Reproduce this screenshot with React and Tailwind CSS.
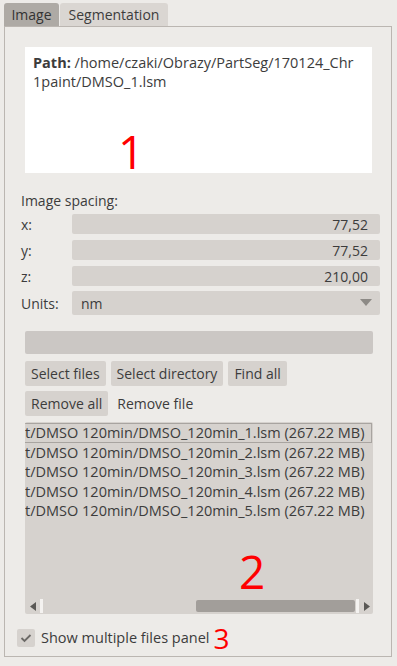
import React from 'react';

const files = [1, 2, 3, 4, 5].map((n) => `t/DMSO 120min/DMSO_120min_${n}.lsm (267.22 MB)`);

function Field({ label, value }) {
  return (
    <div className="flex items-center h-[26px]">
      <span className="w-[51px]">{label}</span>
      <div className="flex-1 h-[20px] bg-[#d6d2ce] rounded-[2px] flex items-center justify-end pr-[12px]">{value}</div>
    </div>
  );
}

function Btn({ children, flat }) {
  return (
    <button className={`h-[25px] rounded-[2px] ${flat ? 'bg-transparent px-[9px]' : 'bg-[#d6d2ce] px-[6px]'}`}>{children}</button>
  );
}

export default function App() {
  return (
    <div className="w-[397px] h-[666px] bg-[#edebe8] text-[#3c3c3c] text-[14px] font-['Open_Sans',sans-serif] pt-[3px] px-[4px] overflow-hidden">
      <div className="flex h-[23px]">
        <div className="w-[55px] bg-[#aeaaa5] rounded-t-[3px] flex items-center justify-center text-[#333]">Image</div>
        <div className="w-[108px] ml-[1px] bg-[#dad6d2] rounded-t-[3px] flex items-center justify-center">Segmentation</div>
      </div>
      <div className="w-[388px] h-[631px] border border-[#bbb6b1] px-[20px] pt-[20px]">
        <div className="w-[347px] h-[126px] bg-white px-[8px] pt-[6px] leading-[19px] text-[14.5px] relative">
          <span className="font-bold">Path:</span> /home/czaki/Obrazy/PartSeg/170124_Chr 1paint/DMSO_1.lsm
          <span className="absolute left-[93px] top-[81px] text-[#ff0000] text-[46px] leading-[46px]">1</span>
        </div>
        <div className="mt-[17px] -ml-[4px] mr-[-9px]">
          <div className="h-[21px]">Image spacing:</div>
          <Field label="x:" value="77,52" />
          <Field label="y:" value="77,52" />
          <Field label="z:" value="210,00" />
          <div className="flex items-center h-[28px]">
            <span className="w-[51px]">Units:</span>
            <div className="flex-1 h-[24px] bg-[#d6d2ce] rounded-[2px] flex items-center justify-between pl-[9px] pr-[8px]">
              <span>nm</span>
              <svg width="12" height="8" viewBox="0 0 12 8"><path d="M0 0 L12 0 L6 7 Z" fill="#8d8a86" /></svg>
            </div>
          </div>
        </div>
        <div className="mt-[14px] w-[348px] h-[23px] bg-[#cbc7c4] rounded-[2px]" />
        <div className="flex gap-[5px] mt-[7px]">
          <Btn>Select files</Btn>
          <Btn>Select directory</Btn>
          <Btn>Find all</Btn>
        </div>
        <div className="flex mt-[5px]">
          <Btn>Remove all</Btn>
          <Btn flat>Remove file</Btn>
        </div>
        <div className="mt-[6px] w-[348px] h-[192px] bg-[#d6d2ce] rounded-[2px] relative overflow-hidden">
          <div className="pt-[1px] text-[14.5px] leading-[19.5px] whitespace-nowrap">
            {files.map((f, i) => (
              <div key={f} className={i === 0 ? 'border border-[#a8a4a0] -ml-px w-[348px] leading-[17.5px]' : ''}>{f}</div>
            ))}
          </div>
          <span className="absolute left-[214px] top-[126px] text-[#ff0000] text-[46px] leading-[46px]">2</span>
          <div className="absolute left-0 right-0 bottom-0 h-[16px] flex items-center">
            <svg className="ml-[5px]" width="6" height="9" viewBox="0 0 6 9"><path d="M6 0 L6 9 L0 4.5 Z" fill="#5a5855" /></svg>
            <div className="ml-[4px] w-[3px] h-[14px] bg-[#f4f2f0]" />
            <div className="ml-[153px] w-[159px] h-[12px] bg-[#a29e9a] rounded-[2px]" />
            <div className="ml-[1px] w-[3px] h-[14px] bg-[#f4f2f0]" />
            <svg className="ml-[5px]" width="6" height="9" viewBox="0 0 6 9"><path d="M0 0 L0 9 L6 4.5 Z" fill="#5a5855" /></svg>
          </div>
        </div>
        <div className="flex items-center mt-[14px] -ml-[8px] h-[20px]">
          <div className="w-[18px] h-[18px] bg-[#d6d2ce] rounded-[2px] flex items-center justify-center">
            <svg width="12" height="10" viewBox="0 0 12 10"><path d="M1.5 5 L4.5 8 L10.5 2" stroke="#6b6966" strokeWidth="1.8" fill="none" /></svg>
          </div>
          <span className="ml-[6px] text-[14.5px]">Show multiple files panel</span>
          <span className="ml-[4px] text-[#ff0000] text-[28px] leading-[28px]">3</span>
        </div>
      </div>
    </div>
  );
}
